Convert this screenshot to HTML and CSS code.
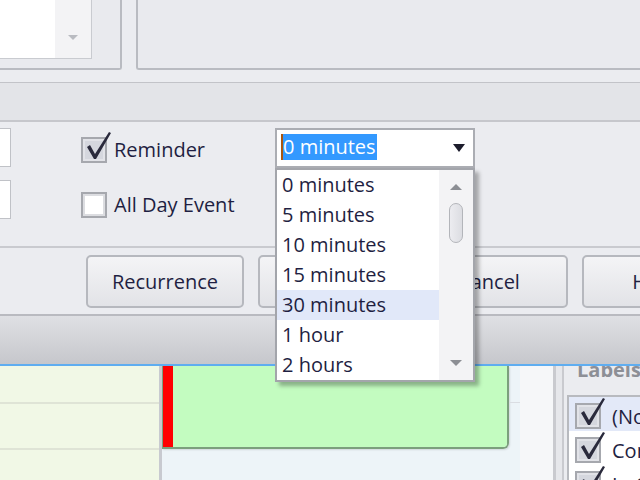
FILE: index.html
```html
<!DOCTYPE html>
<html>
<head>
<meta charset="utf-8">
<link rel="stylesheet" href="styles.css">
</head>
<body>
<div class="dialog">
  <div class="top-row">
    <div class="panel-left">
      <div class="field"><div class="field-btn"><span class="tri-small"></span></div></div>
    </div>
    <div class="panel-right"></div>
  </div>
  <div class="band"></div>
  <div class="main">
    <div class="edge">
      <div class="edge-box"></div>
      <div class="edge-box"></div>
    </div>
    <div class="checks">
      <div class="check-row">
        <span class="cb checked">
          <svg class="tick" viewBox="0 0 30 32" width="30" height="32"><polygon points="3,15 6,13 11,22 25,0 27,1 12,27 10,27" fill="#2a2a3c"/></svg>
        </span>
        <span>Reminder</span>
      </div>
      <div class="check-row">
        <span class="cb"></span>
        <span>All Day Event</span>
      </div>
    </div>
    <div class="combo">
      <span class="sel">0 minutes</span>
      <span class="combo-arrow"></span>
      <div class="popup">
        <div class="list">
          <div class="item">0 minutes</div>
          <div class="item">5 minutes</div>
          <div class="item">10 minutes</div>
          <div class="item">15 minutes</div>
          <div class="item hl">30 minutes</div>
          <div class="item">1 hour</div>
          <div class="item">2 hours</div>
        </div>
        <div class="sb">
          <span class="sb-up"></span>
          <span class="sb-thumb"></span>
          <span class="sb-down"></span>
        </div>
      </div>
    </div>
  </div>
  <div class="buttons">
    <div class="btn w158">Recurrence</div>
    <div class="btn w138"></div>
    <div class="btn w158">Cancel</div>
    <div class="btn w144">Help</div>
  </div>
  <div class="footer"></div>
</div>
<div class="calendar">
  <div class="cal-left">
    <div class="cal-row r1"></div>
    <div class="cal-row r2"></div>
    <div class="cal-row r3"></div>
  </div>
  <div class="cal-vline"></div>
  <div class="cal-main">
    <div class="cal-top">
      <div class="appt"><div class="appt-bar"></div><div class="appt-body"></div></div>
      <div class="cal-strip"><div class="strip-row"></div></div>
    </div>
  </div>
  <div class="cal-white"></div>
  <div class="vsplit"></div>
  <div class="labels">
    <div class="labels-title"><span>Labels</span></div>
    <div class="lb">
      <div class="lb-item hl2">
        <span class="cb checked">
          <svg class="tick" viewBox="0 0 30 32" width="30" height="32"><polygon points="3,15 6,13 11,22 25,0 27,1 12,27 10,27" fill="#2a2a3c"/></svg>
        </span>
        <span>(None)</span>
      </div>
      <div class="lb-item">
        <span class="cb checked">
          <svg class="tick" viewBox="0 0 30 32" width="30" height="32"><polygon points="3,15 6,13 11,22 25,0 27,1 12,27 10,27" fill="#2a2a3c"/></svg>
        </span>
        <span>Completed</span>
      </div>
      <div class="lb-item">
        <span class="cb checked">
          <svg class="tick" viewBox="0 0 30 32" width="30" height="32"><polygon points="3,15 6,13 11,22 25,0 27,1 12,27 10,27" fill="#2a2a3c"/></svg>
        </span>
        <span>In Crunch</span>
      </div>
    </div>
  </div>
</div>
</body>
</html>
```

FILE: styles.css
```css
* { box-sizing: border-box; }
body {
  margin: 0;
  width: 640px;
  height: 480px;
  overflow: hidden;
  background: #ebecf0;
  font-family: "Open Sans", "Noto Sans", sans-serif;
  font-size: 20px;
  color: #1f1f42;
}
.dialog {
  height: 366px;
  display: flex;
  flex-direction: column;
  background: #ebecf0;
}
.top-row {
  height: 70px;
  display: flex;
  flex: none;
}
.panel-left {
  width: 122px;
  height: 70px;
  border-right: 2px solid #b9bbc1;
  border-bottom: 2px solid #b9bbc1;
  border-bottom-right-radius: 3px;
  background: #e9eaee;
}
.field {
  width: 92px;
  height: 59px;
  border-right: 1px solid #c9cbd0;
  border-bottom: 1px solid #c9cbd0;
  background: #fff;
  display: flex;
  justify-content: flex-end;
}
.field-btn {
  width: 36px;
  background: #f3f3f5;
  display: flex;
  align-items: flex-end;
  justify-content: center;
  padding-bottom: 18px;
}
.tri-small {
  width: 0;
  height: 0;
  border-left: 5px solid transparent;
  border-right: 5px solid transparent;
  border-top: 5px solid #b9bbc1;
}
.panel-right {
  flex: 1;
  margin-left: 14px;
  height: 70px;
  border-left: 2px solid #b9bbc1;
  border-bottom: 2px solid #b9bbc1;
  border-bottom-left-radius: 3px;
  background: #e9eaee;
}
.band {
  flex: none;
  margin-top: 12px;
  height: 40px;
  border-top: 1px solid #c2c3c8;
  border-bottom: 2px solid #c6c7cc;
  background: #e3e4e8;
}
.main {
  flex: none;
  height: 126px;
  border-bottom: 2px solid #c9cacf;
  display: flex;
  align-items: flex-start;
}
.edge {
  width: 11px;
  display: flex;
  flex-direction: column;
  gap: 13px;
  padding-top: 6px;
}
.edge-box {
  height: 39px;
  border: 1px solid #c0c2c7;
  border-left: none;
  background: #fff;
}
.checks {
  margin-left: 70px;
  width: 194px;
  padding-top: 15px;
  display: flex;
  flex-direction: column;
  gap: 29px;
}
.check-row {
  display: flex;
  align-items: center;
  gap: 7px;
  height: 26px;
  line-height: 26px;
  white-space: nowrap;
}
.cb {
  position: relative;
  flex: none;
  width: 26px;
  height: 26px;
  border: 2px solid #a6a8ae;
  background: #fff;
  box-shadow: inset 0 0 0 2px #dcdde1;
}
.cb.checked {
  background: #d5d7de;
  box-shadow: inset 0 0 0 2px #e2e3e8;
}
.tick {
  position: absolute;
  left: 1px;
  top: -7px;
  overflow: visible;
}
.combo {
  position: relative;
  margin-top: 6px;
  width: 200px;
  height: 40px;
  border: 2px solid #abadb3;
  background: #fff;
  display: flex;
  align-items: flex-start;
}
.sel {
  margin: 4px 0 0 4px;
  height: 26px;
  line-height: 26px;
  background: #3399ff;
  color: #fff;
  padding: 0 1px 0 0;
  border-left: 2px solid #a8560f;
  white-space: nowrap;
}
.combo-arrow {
  margin-left: auto;
  margin-right: 8px;
  margin-top: 14px;
  width: 0;
  height: 0;
  border-left: 6px solid transparent;
  border-right: 6px solid transparent;
  border-top: 8px solid #1c1c2c;
}
.popup {
  position: absolute;
  left: -2px;
  top: 38px;
  width: 200px;
  height: 214px;
  border: 2px solid #a3a5ab;
  background: #fff;
  box-shadow: 4px 4px 4px rgba(0, 0, 0, 0.3);
  display: flex;
  z-index: 5;
}
.list {
  flex: 1;
}
.item {
  height: 30px;
  line-height: 30px;
  padding-left: 5px;
  white-space: nowrap;
}
.item.hl {
  background: #e1e8f9;
}
.sb {
  width: 34px;
  background: #f3f3f5;
  display: flex;
  flex-direction: column;
  align-items: center;
  padding: 14px 0;
}
.sb-up {
  width: 0;
  height: 0;
  border-left: 6px solid transparent;
  border-right: 6px solid transparent;
  border-bottom: 6px solid #8c8e94;
}
.sb-thumb {
  margin-top: 13px;
  width: 14px;
  height: 40px;
  border: 1px solid #b3b5ba;
  border-radius: 7px;
  background: linear-gradient(to right, #ececf0, #dcdde2);
}
.sb-down {
  margin-top: auto;
  width: 0;
  height: 0;
  border-left: 6px solid transparent;
  border-right: 6px solid transparent;
  border-top: 6px solid #8c8e94;
}
.buttons {
  flex: none;
  height: 68px;
  display: flex;
  gap: 14px;
  padding: 7px 0 0 86px;
  border-bottom: 2px solid #b9bac0;
  overflow: hidden;
}
.btn {
  flex: none;
  height: 53px;
  border: 2px solid #b6b8be;
  border-radius: 5px;
  background: linear-gradient(#f4f4f6, #e2e3e7);
  display: flex;
  align-items: center;
  justify-content: center;
  white-space: nowrap;
}
.w158 { width: 158px; }
.w138 { width: 138px; }
.w144 { width: 144px; }
.footer {
  flex: none;
  height: 50px;
  background: linear-gradient(#dfe0e4, #c6c7cc);
  border-bottom: 2px solid #5fadf0;
}
.calendar {
  height: 114px;
  display: flex;
}
.cal-left {
  width: 159px;
  background: #f1f8e6;
  display: flex;
  flex-direction: column;
}
.cal-row {
  border-bottom: 2px solid #dfe4d6;
}
.r1 { height: 38px; }
.r2 { height: 46px; }
.r3 { flex: 1; border-bottom: none; }
.cal-vline {
  width: 3px;
  background: #c8cad0;
}
.cal-main {
  width: 358px;
  background: #edf4f8;
}
.cal-top {
  display: flex;
  height: 83px;
}
.appt {
  width: 347px;
  display: flex;
  border-left: 1px solid #7c9f7d;
  border-right: 2px solid #7c9f7d;
  border-bottom: 2px solid #7c9f7d;
  border-bottom-right-radius: 6px;
  overflow: hidden;
  box-shadow: 1px 1px 2px rgba(0, 0, 0, 0.12);
}
.appt-bar {
  width: 10px;
  background: #ff0000;
}
.appt-body {
  flex: 1;
  background: #c3fcc0;
}
.cal-strip {
  flex: 1;
}
.strip-row {
  height: 37px;
  border-bottom: 1px solid #dadde2;
}
.cal-white {
  width: 33px;
  background: #f6f7f9;
}
.vsplit {
  width: 11px;
  border-left: 3px solid #c9cacf;
  border-right: 2px solid #c9cacf;
  background: #e6e7eb;
}
.labels {
  flex: 1;
  background: #ebecf0;
  padding-left: 3px;
  overflow: hidden;
}
.labels-title {
  height: 16px;
  overflow: hidden;
  padding-left: 10px;
  color: #8d8f96;
  font-weight: bold;
  white-space: nowrap;
}
.labels-title span {
  display: block;
  line-height: 20px;
  margin-top: -6px;
}
.lb {
  margin-top: 13px;
  width: 200px;
  border-top: 2px solid #b8babf;
  border-left: 2px solid #b8babf;
  background: #fff;
}
.lb-item {
  height: 34px;
  display: flex;
  align-items: center;
  gap: 11px;
  padding-left: 6px;
  padding-top: 4px;
  white-space: nowrap;
}
.lb-item.hl2 {
  background: #e3e9f8;
}
```
